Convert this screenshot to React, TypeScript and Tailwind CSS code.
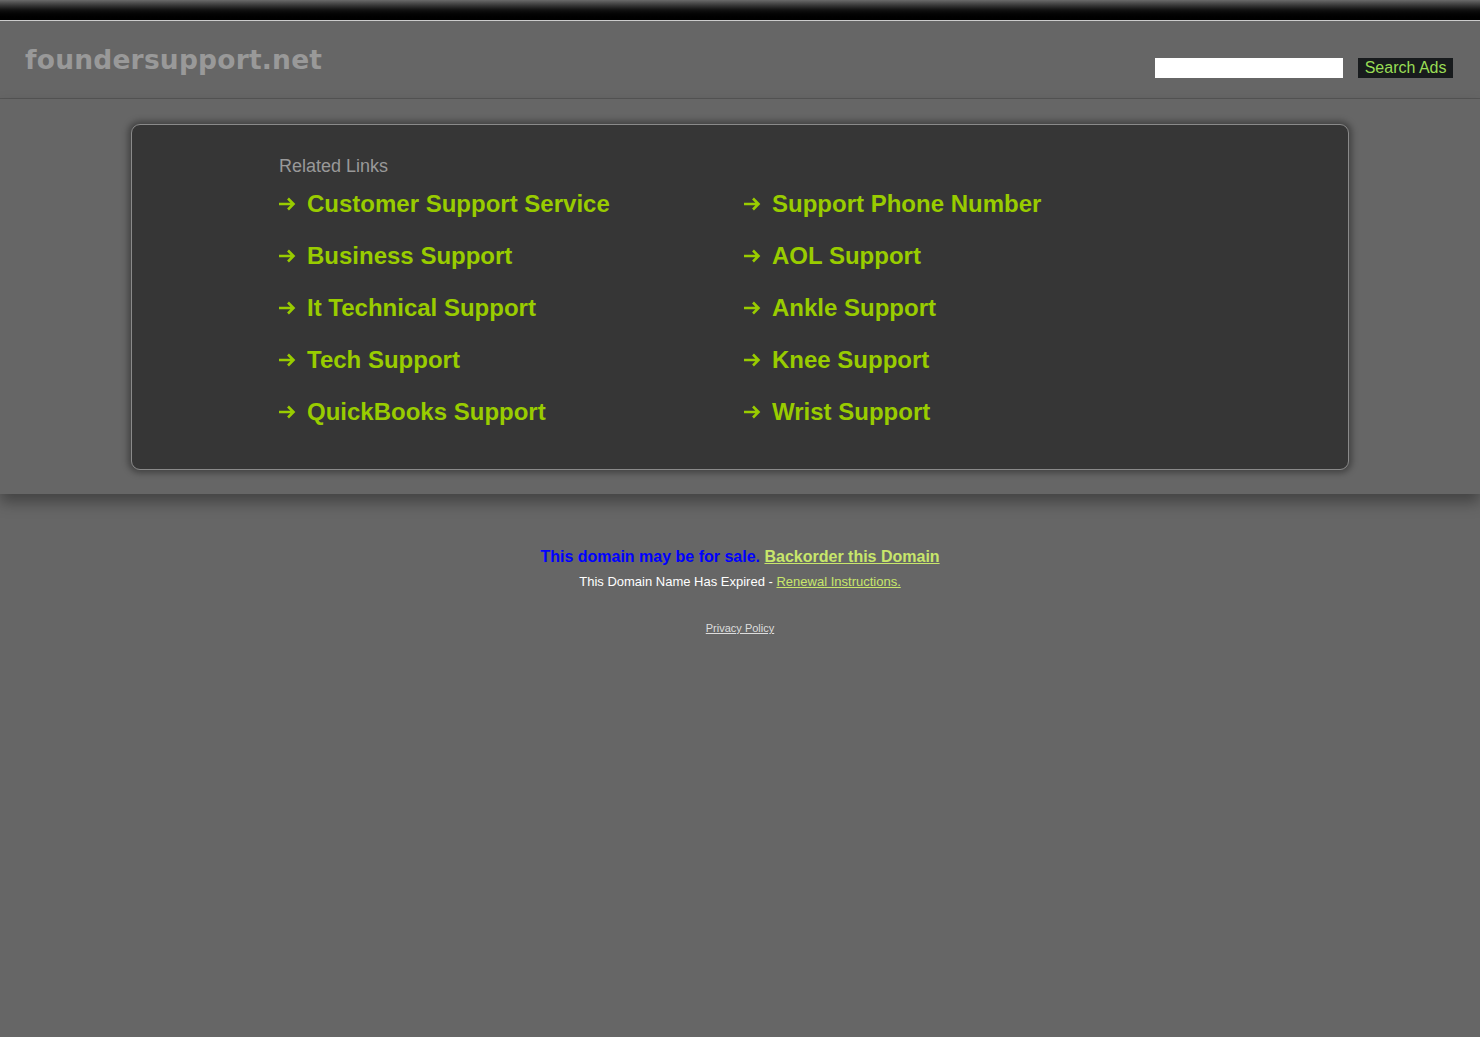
import React from 'react';

const LEFT = ['Customer Support Service', 'Business Support', 'It Technical Support', 'Tech Support', 'QuickBooks Support'];
const RIGHT = ['Support Phone Number', 'AOL Support', 'Ankle Support', 'Knee Support', 'Wrist Support'];

const Arrow = () => (
  <svg width="18" height="14" viewBox="0 0 18 14" className="mr-[11px] shrink-0" aria-hidden="true">
    <path d="M1 7H16M10 1.5L15.5 7L10 12.5" fill="none" stroke="#99cc00" strokeWidth="2.6" strokeLinecap="butt" strokeLinejoin="miter" />
  </svg>
);

const LinkRow = ({ label }: { label: string }) => (
  <li className="flex items-center h-[52px]">
    <Arrow />
    <a href="#" className="text-[24px] font-bold text-[#99cc00] leading-none">
      {label}
    </a>
  </li>
);

export default function App() {
  return (
    <div className="min-h-[1037px] bg-[#666666] font-['Liberation_Sans',Arial,sans-serif]">
      {/* top bar */}
      <div className="h-[20px] bg-gradient-to-b from-[#6a6a6a] via-[#111111] to-black border-b border-[#cccccc] box-content" />

      {/* header */}
      <div className="h-[78px] border-b border-[#555555] flex items-start justify-between pl-[25px] pr-[27px]">
        <h1 className="mt-[26px] text-[26.5px] font-bold text-[#999999] font-['DejaVu_Sans',Verdana,sans-serif] leading-none tracking-[0.2px]">
          foundersupport.net
        </h1>
        <form className="mt-[37px] flex items-center gap-[15px]" onSubmit={(e) => e.preventDefault()}>
          <input type="text" className="w-[188px] h-[20px] bg-white outline-none border-0" />
          <button type="submit" className="h-[20px] px-[6.5px] bg-[#181b1d] text-[#99dd55] text-[16px] leading-[20px]">
            Search Ads
          </button>
        </form>
      </div>

      {/* content */}
      <div className="relative bg-[#666666] pt-[25px] pb-[24px] shadow-[0_8px_14px_rgba(0,0,0,0.35)]">
        <div className="mx-auto w-[1218px] h-[346px] rounded-[9px] border border-[#8a8a8a] bg-[#363636] shadow-[0_0_6px_3px_rgba(0,0,0,0.35)] pl-[147px] pt-[30px]">
          <h2 className="text-[18px] text-[#999999] leading-[22px]">Related Links</h2>
          <div className="flex mt-[1px] -ml-[1px]">
            <ul className="w-[465px]">
              {LEFT.map((l) => (
                <LinkRow key={l} label={l} />
              ))}
            </ul>
            <ul>
              {RIGHT.map((l) => (
                <LinkRow key={l} label={l} />
              ))}
            </ul>
          </div>
        </div>
      </div>

      {/* footer */}
      <div className="text-center pt-[53px]">
        <p className="text-[16px] font-bold leading-[20px]">
          <span className="text-[#0000ff]">This domain may be for sale. </span>
          <a href="#" className="text-[#c8e66b] underline">Backorder this Domain</a>
        </p>
        <p className="mt-[7px] text-[13px] text-white leading-[16px]">
          This Domain Name Has Expired -{' '}
          <a href="#" className="text-[#c8e66b] underline">Renewal Instructions.</a>
        </p>
        <p className="mt-[31px] text-[11px] leading-[14px]">
          <a href="#" className="text-[#dddddd] underline">Privacy Policy</a>
        </p>
      </div>
    </div>
  );
}
